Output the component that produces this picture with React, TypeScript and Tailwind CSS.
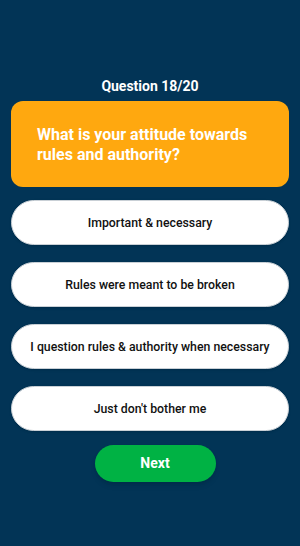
export default function App() {
  const options = [
    'Important & necessary',
    'Rules were meant to be broken',
    'I question rules & authority when necessary',
    "Just don't bother me",
  ]

  return (
    <div
      className="w-[300px] h-[546px] bg-[#023456] flex flex-col items-center pt-[76px] px-[11px]"
      style={{ fontFamily: 'Roboto, "Noto Sans", sans-serif' }}
    >
      <h1 className="text-[14px] leading-[20px] font-bold text-white">Question 18/20</h1>

      <div className="mt-[5px] w-full h-[86px] rounded-[12px] bg-[#FFA80F] flex items-center px-[26px] pt-[2px]">
        <p className="text-[16px] leading-[20px] font-bold text-white">
          What is your attitude towards rules and authority?
        </p>
      </div>

      <div className="mt-[13px] w-full flex flex-col gap-[17px]">
        {options.map((option) => (
          <button
            key={option}
            className="w-full h-[45px] rounded-full bg-white border border-[#c9d0d6] shadow-sm text-[12.3px] font-medium text-[#111] flex items-center justify-center pt-[2px]"
          >
            {option}
          </button>
        ))}
      </div>

      <button className="mt-[14px] ml-[10px] w-[121px] h-[37px] rounded-full bg-[#00B244] text-white text-[14px] font-bold shadow-md">
        Next
      </button>
    </div>
  )
}
